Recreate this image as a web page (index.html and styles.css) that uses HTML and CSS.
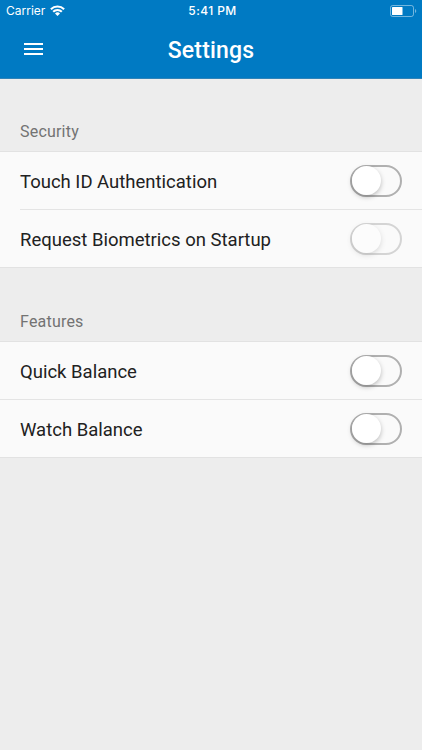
FILE: index.html
```
<!DOCTYPE html>
<html lang="en">
<head>
  <meta charset="UTF-8">
  <title>Settings</title>
  <meta name="viewport" content="width=device-width, initial-scale=1.0">
  <link rel="stylesheet" href="styles.css">
</head>
<body>
  <header class="header">
    <div class="status-bar">
      <div class="carrier">
        <span>Carrier</span>
        <svg class="wifi" width="15" height="11" viewBox="0 0 15 11">
          <g fill="none" stroke="#fff" stroke-width="2.1">
            <path d="M.9 4.2a9.3 9.3 0 0 1 13.2 0"/>
            <path d="M3.2 6.8a6 6 0 0 1 8.6 0"/>
          </g>
          <path d="M7.5 10.9L5 8.5a3.5 3.5 0 0 1 5 0z" fill="#fff"/>
        </svg>
      </div>
      <div class="clock">5:41 PM</div>
      <div class="battery">
        <svg width="27" height="12" viewBox="0 0 27 12">
          <rect x=".5" y=".5" width="23" height="11" rx="2.2" fill="none" stroke="#fff" stroke-opacity=".45"/>
          <rect x="2" y="2" width="10.5" height="8" rx=".6" fill="#fff"/>
          <path d="M25 4v4a2.2 2.2 0 0 0 0-4z" fill="#fff" fill-opacity=".45"/>
        </svg>
      </div>
    </div>
    <div class="nav-bar">
      <svg class="menu" width="19" height="14" viewBox="0 0 19 14">
        <path d="M0 2h19M0 7h19M0 12h19" stroke="#fff" stroke-width="2"/>
      </svg>
      <h1>Settings</h1>
    </div>
  </header>

  <h2 class="section-title">Security</h2>
  <ul class="list inset">
    <li class="row"><span>Touch ID Authentication</span><i class="toggle"></i></li>
    <li class="row"><span>Request Biometrics on Startup</span><i class="toggle disabled"></i></li>
  </ul>

  <h2 class="section-title features">Features</h2>
  <ul class="list">
    <li class="row"><span>Quick Balance</span><i class="toggle"></i></li>
    <li class="row"><span>Watch Balance</span><i class="toggle"></i></li>
  </ul>
</body>
</html>
```
FILE: styles.css
```
* {
  box-sizing: border-box;
}
body {
  margin: 0;
  background-color: #ededed;
  color: #212121;
  font-family: Roboto, sans-serif;
}
.header {
  height: 79px;
  background-color: #007ac3;
  border-bottom: 1px solid #2f83b8;
  color: #fff;
}
.status-bar {
  display: grid;
  grid-template-columns: 1fr auto 1fr;
  align-items: center;
  height: 21px;
  padding: 0 5px 0 6px;
  font-family: Inter, sans-serif;
  font-size: 12px;
}
.carrier {
  display: flex;
  align-items: center;
  gap: 5px;
}
.clock {
  padding-left: 2px;
  font-weight: 500;
  letter-spacing: 0.4px;
}
.battery {
  display: flex;
  justify-content: flex-end;
}
.nav-bar {
  display: grid;
  grid-template-columns: 19px 1fr 19px;
  align-items: center;
  height: 58px;
  padding: 0 24px;
}
.menu {
  margin-bottom: 2px;
}
h1 {
  margin: 0;
  font-size: 23px;
  font-weight: 500;
  letter-spacing: 0.2px;
  text-align: center;
}
.section-title {
  display: flex;
  align-items: flex-end;
  height: 72px;
  margin: 0;
  padding: 0 20px 9px;
  color: #737373;
  font-size: 16px;
  font-weight: 400;
  letter-spacing: 0.2px;
  line-height: 20px;
}
.features {
  height: 73px;
}
.list {
  margin: 0;
  padding: 0;
  background-color: #fafafa;
  border-top: 1px solid #e2e2e2;
  border-bottom: 1px solid #e2e2e2;
  list-style: none;
}
.row {
  display: flex;
  align-items: center;
  justify-content: space-between;
  height: 57px;
  padding: 0 20px;
  font-size: 18.5px;
}
.row span {
  padding-top: 2px;
}
.row + .row {
  height: 58px;
  border-top: 1px solid #e4e4e4;
}
.inset .row + .row {
  margin-left: 20px;
  padding-left: 0;
}
.toggle {
  display: flex;
  width: 52px;
  height: 32px;
  margin-top: 1px;
  border: 2px solid #b0b0b0;
  border-radius: 16px;
}
.toggle::before {
  content: "";
  width: 29px;
  height: 29px;
  margin: -1px 0 0 -0.5px;
  border-radius: 50%;
  background-color: #fff;
  box-shadow: 0 2px 5px rgba(0, 0, 0, 0.25);
}
.disabled {
  opacity: 0.5;
}
```
